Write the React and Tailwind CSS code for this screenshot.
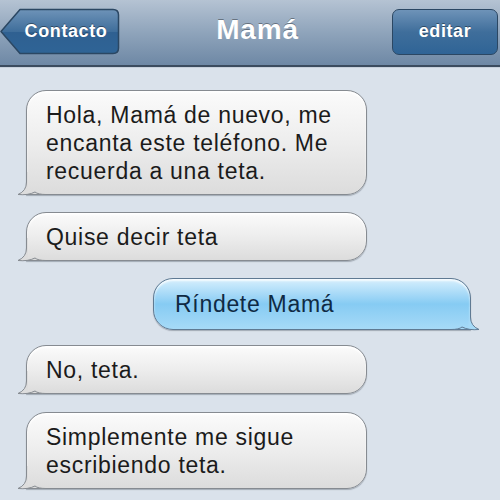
import React from 'react';

const font = { fontFamily: '"Liberation Sans", Arial, sans-serif' };

function GrayBubble({ children, className = '' }) {
  return (
    <div className={`relative w-[341px] ${className}`}>
      <div className="rounded-[20px] rounded-bl-none border border-[#868b91] bg-linear-to-b from-[#fbfbfb] via-[#ededed] to-[#dcdcdc] pl-[19px] pr-3 pt-[10px] pb-[9px] text-[23px] leading-[28px] tracking-[0.7px] text-[#1b1b1b] shadow-[0_1px_1px_rgba(60,70,80,0.35),inset_0_2px_2px_rgba(255,255,255,0.9)]">
        {children}
      </div>
      {/* tail */}
      <svg className="absolute left-[-10px] bottom-[-1px]" width="30" height="24" viewBox="0 0 30 24">
        <path d="M10.5 0 L10.5 10 Q10.5 19 2 22.5 Q12 23.5 19 20 Q22 22.5 30 22.5 L30 21 L12 21 L12 0 Z" fill="#dddddd" />
        <path d="M10.5 0 L10.5 10 Q10.5 19 2 22.5 Q12 23.5 19 20 Q22 22.5 30 22.5" fill="none" stroke="#868b91" strokeWidth="1" />
      </svg>
    </div>
  );
}

function BlueBubble({ children, className = '' }) {
  return (
    <div className={`relative w-[318px] ${className}`}>
      <div className="rounded-[20px] rounded-br-none border border-[#5f7a93] bg-linear-to-b from-[#d6effd] via-[#86cbf3] to-[#a6daf7] pl-[21px] pr-3 pt-[11px] pb-[11px] text-[23px] leading-[28px] tracking-[0.7px] text-[#0f2a44] shadow-[0_1px_1px_rgba(60,70,80,0.35),inset_0_2px_2px_rgba(255,255,255,0.8)]">
        {children}
      </div>
      <svg className="absolute right-[-10px] bottom-[-1px]" width="30" height="24" viewBox="0 0 30 24">
        <path d="M19.5 0 L19.5 10 Q19.5 19 28 22.5 Q18 23.5 11 20 Q8 22.5 0 22.5 L0 21 L18 21 L18 0 Z" fill="#a6daf7" />
        <path d="M19.5 0 L19.5 10 Q19.5 19 28 22.5 Q18 23.5 11 20 Q8 22.5 0 22.5" fill="none" stroke="#5f7a93" strokeWidth="1" />
      </svg>
    </div>
  );
}

export default function App() {
  return (
    <div className="w-[500px] h-[500px] overflow-hidden bg-[#dae2eb]" style={font}>
      {/* Nav bar */}
      <div className="h-[67px] flex items-center justify-between bg-linear-to-b from-[#b5c3d3] via-[#8fa4bb] to-[#6e88a5] border-b-2 border-[#3b4b5e] pr-[2px]">
        <div className="relative w-[120px] h-[47px] flex items-center justify-center pl-[12px] -mt-[2px]">
          <svg className="absolute inset-0" width="120" height="47" viewBox="0 0 120 47">
            <defs>
              <linearGradient id="btn" x1="0" y1="0" x2="0" y2="1">
                <stop offset="0" stopColor="#6e93b8" />
                <stop offset="0.5" stopColor="#3f6e9b" />
                <stop offset="0.51" stopColor="#2f6091" />
                <stop offset="1" stopColor="#2f6496" />
              </linearGradient>
            </defs>
            <path d="M1 23.5 L20 1.5 L113 1.5 Q118.5 1.5 118.5 7 L118.5 40 Q118.5 45.5 113 45.5 L20 45.5 Z" fill="url(#btn)" stroke="#2b4763" strokeWidth="1.5" strokeLinejoin="round" />
          </svg>
          <span className="relative text-white font-bold text-[18px] tracking-[0.6px] [text-shadow:0_-1px_0_rgba(0,0,0,0.4)]">Contacto</span>
        </div>
        <span className="text-white font-bold text-[28px] tracking-[0.8px] -mt-[5px] pl-[3px] [text-shadow:0_-1px_0_rgba(0,0,0,0.35)]">Mamá</span>
        <div className="w-[106px] h-[46px] -mt-[2px] rounded-[7px] border-[1.5px] border-[#2b4763] bg-linear-to-b from-[#6e93b8] via-[#3f6e9b] to-[#2f6496] flex items-center justify-center">
          <span className="text-white font-bold text-[18px] tracking-[0.6px] [text-shadow:0_-1px_0_rgba(0,0,0,0.4)]">editar</span>
        </div>
      </div>
      <div className="h-px bg-[#c7d0db]" />

      {/* Messages */}
      <div className="flex flex-col pl-[26px] pt-[22px]">
        <GrayBubble>
          Hola, Mamá de nuevo, me<br />encanta este teléfono. Me<br />recuerda a una teta.
        </GrayBubble>
        <GrayBubble className="mt-[17px]">Quise decir teta</GrayBubble>
        <BlueBubble className="mt-[17px] ml-[127px]">Ríndete Mamá</BlueBubble>
        <GrayBubble className="mt-[15px]">No, teta.</GrayBubble>
        <GrayBubble className="mt-[18px]">
          Simplemente me sigue<br />escribiendo teta.
        </GrayBubble>
      </div>
    </div>
  );
}
